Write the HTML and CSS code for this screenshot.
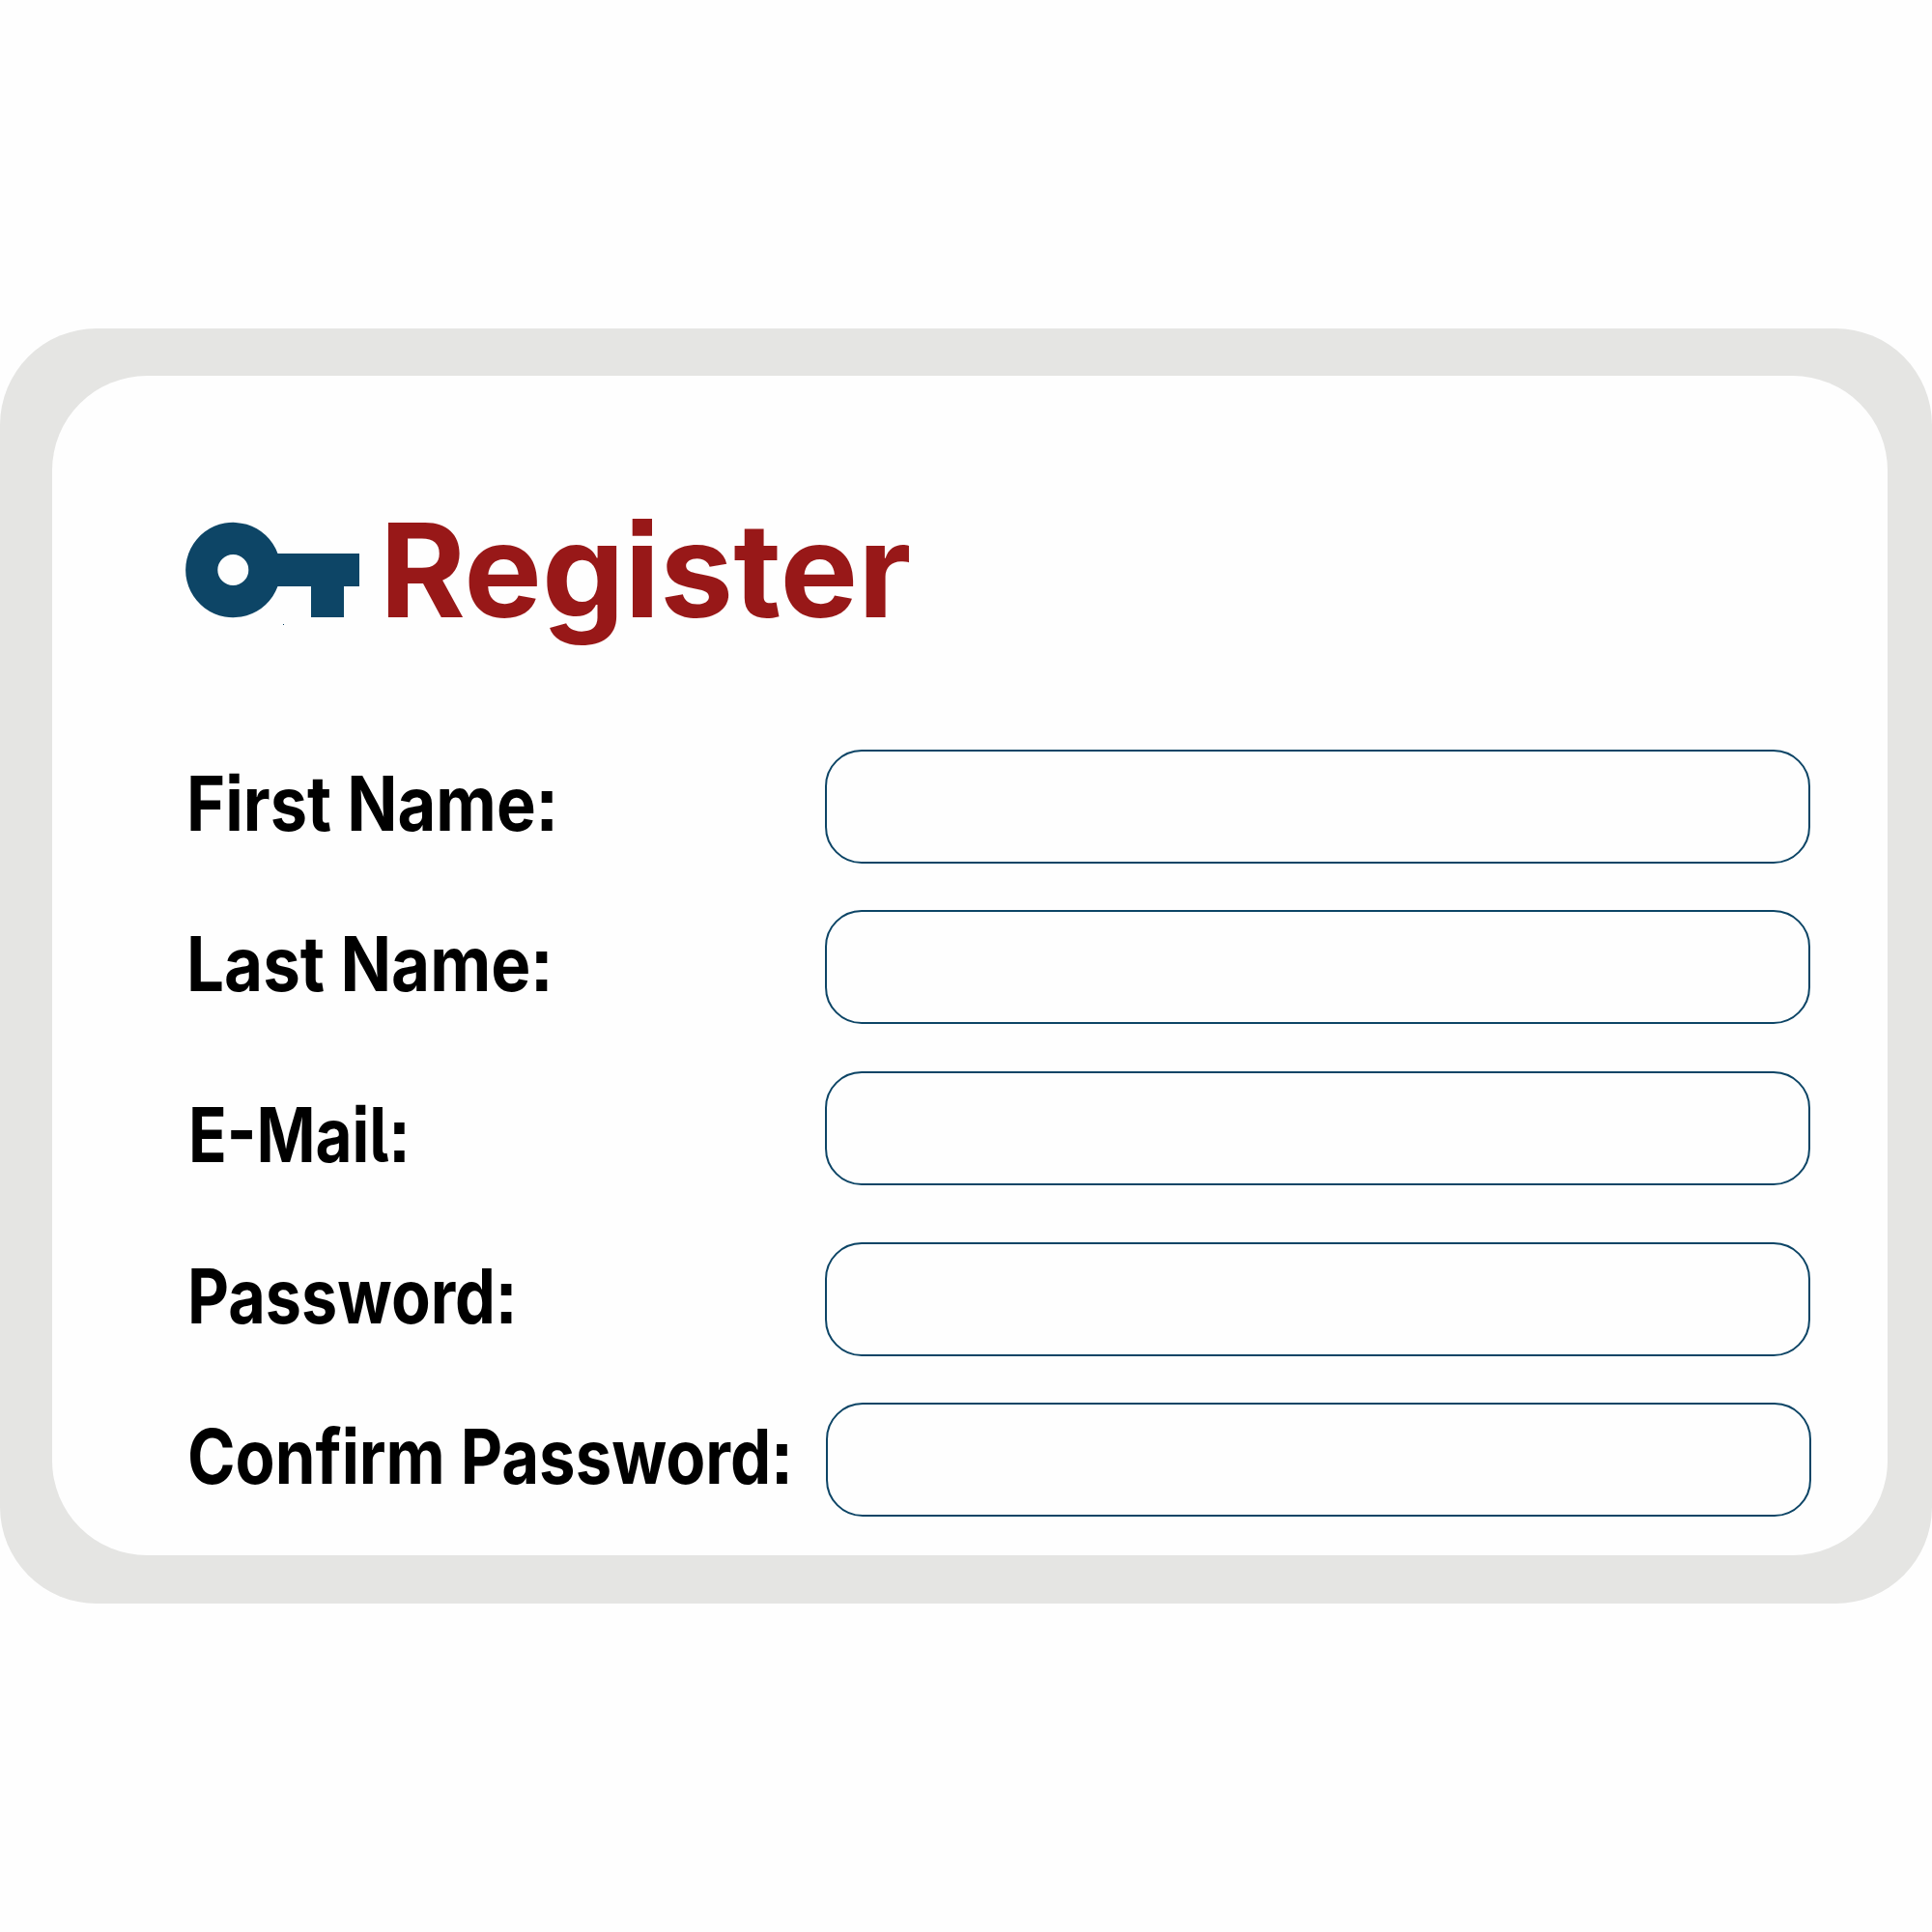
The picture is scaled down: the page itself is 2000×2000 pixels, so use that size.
FILE: index.html
```html
<!DOCTYPE html>
<html lang="en">
<head>
<meta charset="utf-8">
<title>Register</title>
<link rel="stylesheet" href="styles.css">
</head>
<body>
<main class="frame">
  <form class="card">
    <header class="heading">
      <svg class="key" viewBox="0 0 181 107" width="181" height="107" aria-hidden="true">
        <path fill-rule="evenodd" d="M95.5 33A49.2 49.2 0 1 0 95.5 67H130V99H164V67H180V33ZM49.3 34A16 16 0 1 1 49.3 66A16 16 0 1 1 49.3 34Z"/>
        <rect x="101" y="106" width="1" height="1"/>
      </svg>
      <h1 class="title">Register</h1>
    </header>
    <div class="row first"><label class="label" for="first">First Name:</label><input class="field" id="first" type="text"></div>
    <div class="row last"><label class="label" for="last">Last Name:</label><input class="field" id="last" type="text"></div>
    <div class="row email"><label class="label" for="email">E-Mail:</label><input class="field" id="email" type="email"></div>
    <div class="row password"><label class="label" for="password">Password:</label><input class="field" id="password" type="password"></div>
    <div class="row confirm"><label class="label" for="confirm">Confirm Password:</label><input class="field" id="confirm" type="password"></div>
  </form>
</main>
</body>
</html>
```
FILE: styles.css
```css
* { box-sizing: border-box; }
body {
  margin: 0;
  height: 2000px;
  padding: 340px 0;
  background: #fefefe;
  font-family: Inter, "Open Sans", sans-serif;
  /* square dots and a tailed lowercase l */
  font-feature-settings: "ss07", "cv05";
  overflow: hidden;
}
.frame {
  height: 1320px;
  padding: 49px 46px 50px 54px;
  border-radius: 100px;
  background: #e5e5e3;
}
.card {
  height: 1221px;
  padding: 151px 79px 0 138px;
  border-radius: 98px;
  background: #fefefe;
}
.heading {
  display: flex;
  height: 236px;
}
.key {
  flex: none;
  fill: #0d4566;
}
.title {
  margin: -30px 0 0 20px;
  height: 160px;
  font-size: 134.8px;
  line-height: 160px;
  font-weight: 700;
  color: #981818;
  white-space: nowrap;
  transform: scaleX(1.005);
  transform-origin: 0 0;
}
.row {
  display: flex;
  height: 118px;
  margin-bottom: 48px;
}
.label {
  --stretch: 0.874;
  --shift: 1px;
  flex: none;
  width: 662px;
  font-size: 78.4px;
  line-height: 111px;
  font-weight: 700;
  color: #000;
  white-space: nowrap;
  transform: translateX(var(--shift)) scaleX(var(--stretch));
  transform-origin: 0 0;
}
.field {
  flex: none;
  width: 1020px;
  height: 118px;
  padding: 0 30px;
  border: 2px solid #0d4566;
  border-radius: 38px;
  background: transparent;
  font: inherit;
  font-size: 60px;
  outline: none;
}
.last { margin-bottom: 49px; }
.last .label { --stretch: 0.881; }
.email { margin-bottom: 59px; }
.email .label { --stretch: 0.836; --shift: 3px; padding-top: 10px; }
.password .label { --stretch: 0.848; --shift: 2px; }
.confirm .label { --stretch: 0.855; --shift: 2px; }
.confirm .field { margin-left: 1px; }
```
